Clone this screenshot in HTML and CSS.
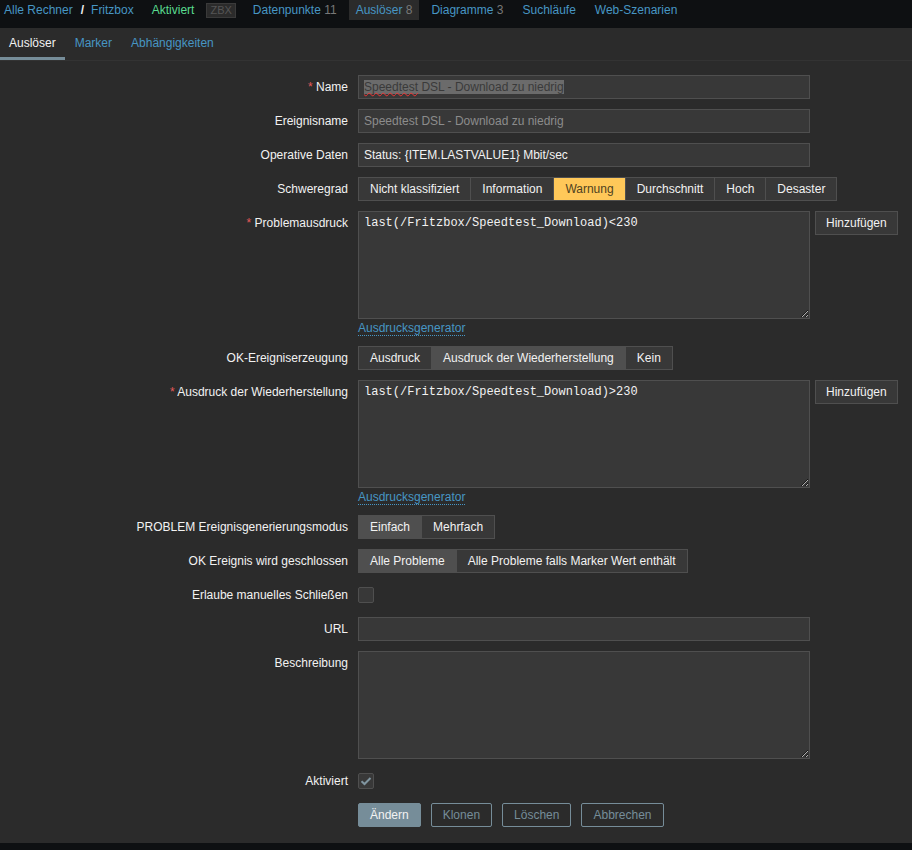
FILE: index.html
```html
<!DOCTYPE html>
<html lang="de">
<head>
<meta charset="utf-8">
<title>Auslöser</title>
<link rel="stylesheet" href="styles.css">
</head>
<body>
<header class="topnav">
  <a class="crumb" href="#">Alle Rechner</a>
  <span class="sep">/</span>
  <a class="crumb" href="#">Fritzbox</a>
  <span class="status">Aktiviert</span>
  <span class="zbx">ZBX</span>
  <nav class="hosttabs">
    <a href="#" class="htab">Datenpunkte <span class="cnt">11</span></a>
    <a href="#" class="htab active">Auslöser <span class="cnt">8</span></a>
    <a href="#" class="htab">Diagramme <span class="cnt">3</span></a>
    <a href="#" class="htab">Suchläufe</a>
    <a href="#" class="htab">Web-Szenarien</a>
  </nav>
</header>

<div class="tabs">
  <a href="#" class="tab active">Auslöser</a>
  <a href="#" class="tab">Marker</a>
  <a href="#" class="tab">Abhängigkeiten</a>
</div>

<main class="content">
  <form class="form">
    <label class="lbl"><span class="req">*</span> Name</label>
    <div class="field"><div class="input"><span class="sel"><span class="spell">Speedtest</span> DSL - Download zu niedrig</span></div></div>

    <label class="lbl">Ereignisname</label>
    <div class="field"><div class="input placeholder">Speedtest DSL - Download zu niedrig</div></div>

    <label class="lbl">Operative Daten</label>
    <div class="field"><div class="input">Status: {ITEM.LASTVALUE1} Mbit/sec</div></div>

    <label class="lbl">Schweregrad</label>
    <div class="field">
      <div class="seg">
        <span class="opt">Nicht klassifiziert</span>
        <span class="opt">Information</span>
        <span class="opt warn">Warnung</span>
        <span class="opt">Durchschnitt</span>
        <span class="opt">Hoch</span>
        <span class="opt">Desaster</span>
      </div>
    </div>

    <label class="lbl"><span class="req">*</span> Problemausdruck</label>
    <div class="field">
      <div class="exprrow">
        <div class="exprcol">
          <textarea class="ta code" spellcheck="false">last(/Fritzbox/Speedtest_Download)&lt;230</textarea>
          <a href="#" class="gen">Ausdrucksgenerator</a>
        </div>
        <button type="button" class="btn-add">Hinzufügen</button>
      </div>
    </div>

    <label class="lbl">OK-Ereigniserzeugung</label>
    <div class="field">
      <div class="seg">
        <span class="opt">Ausdruck</span>
        <span class="opt on">Ausdruck der Wiederherstellung</span>
        <span class="opt">Kein</span>
      </div>
    </div>

    <label class="lbl"><span class="req">*</span> Ausdruck der Wiederherstellung</label>
    <div class="field">
      <div class="exprrow">
        <div class="exprcol">
          <textarea class="ta code" spellcheck="false">last(/Fritzbox/Speedtest_Download)&gt;230</textarea>
          <a href="#" class="gen">Ausdrucksgenerator</a>
        </div>
        <button type="button" class="btn-add">Hinzufügen</button>
      </div>
    </div>

    <label class="lbl">PROBLEM Ereignisgenerierungsmodus</label>
    <div class="field">
      <div class="seg">
        <span class="opt on">Einfach</span>
        <span class="opt">Mehrfach</span>
      </div>
    </div>

    <label class="lbl">OK Ereignis wird geschlossen</label>
    <div class="field">
      <div class="seg">
        <span class="opt on">Alle Probleme</span>
        <span class="opt">Alle Probleme falls Marker Wert enthält</span>
      </div>
    </div>

    <label class="lbl">Erlaube manuelles Schließen</label>
    <div class="field"><span class="cb"></span></div>

    <label class="lbl">URL</label>
    <div class="field"><div class="input"></div></div>

    <label class="lbl">Beschreibung</label>
    <div class="field"><textarea class="ta" spellcheck="false"></textarea></div>

    <label class="lbl">Aktiviert</label>
    <div class="field">
      <span class="cb checked">
        <svg width="12" height="10" viewBox="0 0 12 10"><path d="M1.5 5.2 L4.5 8 L10.5 2" fill="none" stroke="#8095a0" stroke-width="2"/></svg>
      </span>
    </div>

    <div></div>
    <div class="field actions">
      <button type="button" class="btn primary">Ändern</button>
      <button type="button" class="btn alt">Klonen</button>
      <button type="button" class="btn alt">Löschen</button>
      <button type="button" class="btn alt">Abbrechen</button>
    </div>
  </form>
</main>

<footer class="footer"></footer>
</body>
</html>
```

FILE: styles.css
```css
* { box-sizing: border-box; }

html, body {
  margin: 0;
  padding: 0;
  background: #2b2b2b;
  color: #f2f2f2;
  font-family: Arial, "Liberation Sans", sans-serif;
  font-size: 12px;
}

a { color: #4796c4; text-decoration: none; }

/* top navigation */
.topnav {
  display: flex;
  align-items: flex-start;
  height: 28px;
  background: #0e1012;
  padding-left: 4px;
}
.topnav .crumb, .topnav .sep, .topnav .status {
  line-height: 20px;
}
.sep { color: #f2f2f2; margin: 0 7px 0 8px; font-weight: bold; }
.status { color: #59db8f; margin-left: 18px; }
.zbx {
  margin: 3px 0 0 12px;
  height: 15px;
  line-height: 13px;
  padding: 0 3px;
  border: 1px solid #3a3a3a;
  background: #2b2b2b;
  color: #555;
  font-size: 11px;
}
.hosttabs { display: flex; margin-left: 10px; gap: 5px; }
.htab {
  line-height: 20px;
  padding: 0 7px;
  color: #4796c4;
}
.htab.active { background: #2b2b2b; }
.cnt { color: #787878; }

/* sub tabs */
.tabs {
  display: flex;
  height: 33px;
  border-bottom: 1px solid #333;
}
.tab {
  height: 32px;
  line-height: 31px;
  padding: 0 9px;
  margin-right: 1px;
  border-bottom: 3px solid transparent;
}
.tab.active { color: #f2f2f2; border-bottom-color: #768d99; }

/* form */
.content { padding: 14px 0 16px; }
.form {
  display: grid;
  grid-template-columns: 348px 1fr;
  column-gap: 10px;
  row-gap: 10px;
  align-items: start;
}
.lbl {
  text-align: right;
  line-height: 24px;
  white-space: nowrap;
}
.req { color: #e45959; }
.field { display: flex; align-items: center; min-height: 24px; }

.input {
  width: 452px;
  height: 24px;
  line-height: 22px;
  padding: 0 5px;
  background: #383838;
  border: 1px solid #4f4f4f;
  color: #f2f2f2;
  white-space: nowrap;
  overflow: hidden;
}
.input.placeholder { color: #8c8c8c; }
.sel { background: #6b6b6b; color: #3a3a3a; }
.spell { text-decoration: underline wavy #e33; text-decoration-thickness: 1px; text-underline-offset: 1px; text-decoration-skip-ink: none; }

.seg {
  display: flex;
  gap: 1px;
  background: #4f4f4f;
  border: 1px solid #4f4f4f;
}
.opt {
  height: 22px;
  line-height: 22px;
  padding: 0 11px;
  background: #383838;
  color: #f2f2f2;
  white-space: nowrap;
}
.opt.on { background: #4f4f4f; }
.opt.warn { background: #ffc859; color: #4f421f; }

.exprrow { display: flex; align-items: flex-start; gap: 5px; }
.exprcol { display: flex; flex-direction: column; align-items: flex-start; }
.ta {
  display: block;
  width: 452px;
  height: 108px;
  margin: 0;
  padding: 4px 5px;
  background: #383838;
  border: 1px solid #4f4f4f;
  border-radius: 0;
  color: #f2f2f2;
  font-family: Arial, "Liberation Sans", sans-serif;
  font-size: 12px;
  line-height: 14px;
  resize: both;
  outline: none;
}
.ta.code { font-family: "Courier New", "Liberation Mono", monospace; }
.gen {
  margin-top: 2px;
  line-height: 14px;
  border-bottom: 1px dotted #4796c4;
}
.btn-add {
  height: 24px;
  padding: 0 10px;
  background: #383838;
  border: 1px solid #4f4f4f;
  color: #f2f2f2;
  font-family: Arial, "Liberation Sans", sans-serif;
  font-size: 12px;
}

.cb {
  display: inline-flex;
  align-items: center;
  justify-content: center;
  width: 16px;
  height: 16px;
  background: #383838;
  border: 1px solid #4f4f4f;
  border-radius: 2px;
}

.actions { gap: 10px; }
.btn {
  height: 24px;
  padding: 0 11px;
  font-family: Arial, "Liberation Sans", sans-serif;
  font-size: 12px;
  border-radius: 2px;
}
.btn.primary { background: #768d99; border: 1px solid #768d99; color: #f2f2f2; }
.btn.alt { background: transparent; border: 1px solid #768d99; color: #768d99; }

.footer { height: 40px; background: #0e1012; }
```
